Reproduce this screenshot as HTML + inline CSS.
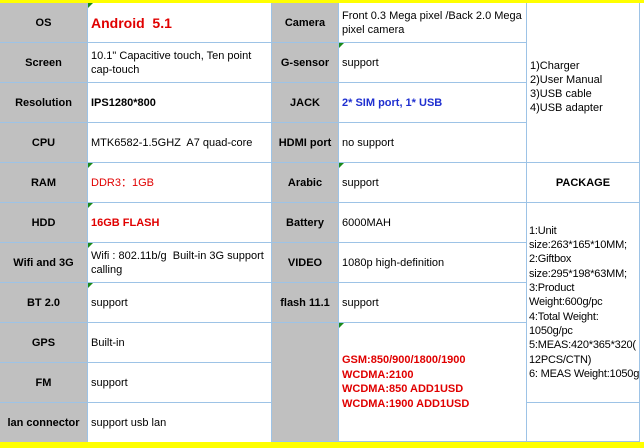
<!DOCTYPE html><html><head><style>
body{margin:0;width:644px;height:448px;background:#fff;position:relative;overflow:hidden;font-family:"Liberation Sans",Arial,sans-serif;font-size:11px;color:#000}
.y{position:absolute;background:#ffff00;z-index:5}
.c{position:absolute;box-sizing:border-box;border-right:1px solid #9dc3e6;border-bottom:1px solid #9dc3e6;display:flex;align-items:center;padding:0 3px;line-height:14px}
.g{background:#c0c0c0;justify-content:center;font-weight:bold;text-align:center}
.w{background:#fff}
.r{color:#e00000}
.b{font-weight:bold}
.t::before{content:"";position:absolute;left:0;top:0;border-top:5px solid #1a8a1a;border-right:5px solid transparent}
</style></head><body>
<div class="y" style="left:0;top:0;width:644px;height:3px"></div>
<div class="y" style="left:0;top:442px;width:644px;height:6px"></div>
<div id="g"></div>
<script>
var rows=[["OS",'<span class="r b" style="font-size:14px">Android&nbsp; 5.1</span>',1,"Camera","Front 0.3 Mega pixel /Back 2.0 Mega pixel camera",0],
["Screen",'10.1" Capacitive touch, Ten point cap-touch',0,"G-sensor","support",1],
["Resolution",'<b>IPS1280*800</b>',0,"JACK",'<b style="color:#1f2fd0">2* SIM port, 1* USB</b>',0],
["CPU","MTK6582-1.5GHZ&nbsp; A7 quad-core",0,"HDMI port","no support",0],
["RAM",'<span class="r">DDR3：1GB</span>',1,"Arabic","support",1],
["HDD",'<b class="r">16GB FLASH</b>',1,"Battery","6000MAH",0],
["Wifi and 3G","Wifi : 802.11b/g&nbsp; Built-in 3G support calling",1,"VIDEO","1080p high-definition",0],
["BT 2.0","support",1,"flash 11.1","support",0],
["GPS","Built-in",0],["FM","support",0],["lan connector","support usb lan",0]];
var h="";
rows.forEach(function(r,i){var y=3+i*40;
h+='<div class="c g" style="left:0;top:'+y+'px;width:88px;height:40px">'+r[0]+'</div>';
h+='<div class="c w'+(r[2]?' t':'')+'" style="left:88px;top:'+y+'px;width:184px;height:40px">'+r[1]+'</div>';
if(r.length>3){h+='<div class="c g" style="left:272px;top:'+y+'px;width:67px;height:40px">'+r[3]+'</div>';
h+='<div class="c w'+(r[5]?' t':'')+'" style="left:339px;top:'+y+'px;width:188px;height:40px">'+r[4]+'</div>';}
});
h+='<div class="c g" style="left:272px;top:323px;width:67px;height:119px"></div>';
h+='<div class="c w r b t" style="left:339px;top:323px;width:188px;height:119px;line-height:14.5px">GSM:850/900/1800/1900<br>WCDMA:2100<br>WCDMA:850 ADD1USD<br>WCDMA:1900 ADD1USD</div>';
h+='<div class="c w" style="left:527px;top:3px;width:113px;height:160px;padding-top:8px">1)Charger<br>2)User Manual<br>3)USB cable<br>4)USB adapter</div>';
h+='<div class="c w b" style="left:527px;top:163px;width:113px;height:40px;justify-content:center">PACKAGE</div>';
h+='<div class="c w" style="left:527px;top:203px;width:113px;height:200px;line-height:14.3px;padding:0 0 0 2px;letter-spacing:-0.2px;white-space:nowrap;overflow:hidden">1:Unit<br>size:263*165*10MM;<br>2:Giftbox<br>size:295*198*63MM;<br>3:Product<br>Weight:600g/pc<br>4:Total Weight:<br>1050g/pc<br>5:MEAS:420*365*320(<br>12PCS/CTN)<br>6: MEAS Weight:1050g</div>';
h+='<div class="c w" style="left:527px;top:403px;width:113px;height:39px"></div>';
document.getElementById("g").innerHTML=h;
</script>
</body></html>
